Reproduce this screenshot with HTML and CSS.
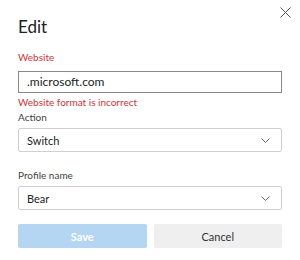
FILE: index.html
```html
<!DOCTYPE html>
<html lang="en">
<head>
    <meta charset="UTF-8">
    <title>Edit</title>
    <link rel="stylesheet" href="styles.css">
</head>
<body>
    <div class="dialog">
        <div class="header">
            <h1 class="title">Edit</h1>
            <button class="close" aria-label="Close">
                <svg width="11" height="11" viewBox="0 0 11 11"><path d="M0.5 0.5 L10.5 10.5 M10.5 0.5 L0.5 10.5" stroke="#555" stroke-width="1" fill="none"/></svg>
            </button>
        </div>

        <div class="field">
            <label class="label label-website error-text">Website</label>
            <div class="input">.microsoft.com</div>
            <div class="error-text message">Website format is incorrect</div>
        </div>

        <div class="field">
            <label class="label">Action</label>
            <div class="select">
                <span>Switch</span>
                <svg width="9" height="5" viewBox="0 0 9 5"><path d="M0.5 0.5 L4.5 4.5 L8.5 0.5" stroke="#666" stroke-width="1" fill="none"/></svg>
            </div>
        </div>

        <div class="field">
            <label class="label">Profile name</label>
            <div class="select">
                <span>Bear</span>
                <svg width="9" height="5" viewBox="0 0 9 5"><path d="M0.5 0.5 L4.5 4.5 L8.5 0.5" stroke="#666" stroke-width="1" fill="none"/></svg>
            </div>
        </div>

        <div class="buttons">
            <button class="btn save">Save</button>
            <button class="btn cancel">Cancel</button>
        </div>
    </div>
</body>
</html>
```

FILE: styles.css
```css
body {
    margin: 0;
    background: #ffffff;
    font-family: Lato, "Open Sans", sans-serif;
    color: #333333;
}

.dialog {
    padding: 15px 18px 0 18px;
    display: flex;
    flex-direction: column;
}

.header {
    display: flex;
    justify-content: space-between;
    align-items: flex-start;
    height: 35px;
}

.title {
    margin: 0;
    font-size: 17px;
    font-weight: 400;
    color: #222222;
    line-height: 24px;
}

.close {
    border: none;
    background: none;
    padding: 0;
    margin: -8px -9px 0 0;
    width: 11px;
    height: 11px;
    display: flex;
}

.field {
    display: flex;
    flex-direction: column;
}

.label {
    font-size: 10px;
    line-height: 14px;
    margin-bottom: 4px;
    color: #444444;
}

.label-website {
    margin-bottom: 7px;
}

.error-text {
    color: #d13438;
}

.input {
    height: 20px;
    border: 1px solid #8a8a8a;
    padding: 0 8px;
    font-size: 12px;
    line-height: 20px;
    color: #222222;
}

.message {
    font-size: 10px;
    line-height: 14px;
    margin-top: 2px;
    margin-bottom: 1px;
}

.select {
    height: 22px;
    border: 1px solid #d0d0d0;
    border-radius: 2px;
    padding: 0 11px 0 8px;
    display: flex;
    align-items: center;
    justify-content: space-between;
    font-size: 11px;
    color: #222222;
    margin-bottom: 16px;
}

.buttons {
    display: flex;
    gap: 7px;
    margin-top: -2px;
}

.btn {
    flex: 1;
    height: 24px;
    border: none;
    border-radius: 2px;
    font-family: Lato, "Open Sans", sans-serif;
    font-size: 11px;
    font-weight: 700;
}

.save {
    background: #b4d6f3;
    color: #ffffff;
}

.cancel {
    background: #efefef;
    color: #333333;
    font-weight: 400;
}
```
